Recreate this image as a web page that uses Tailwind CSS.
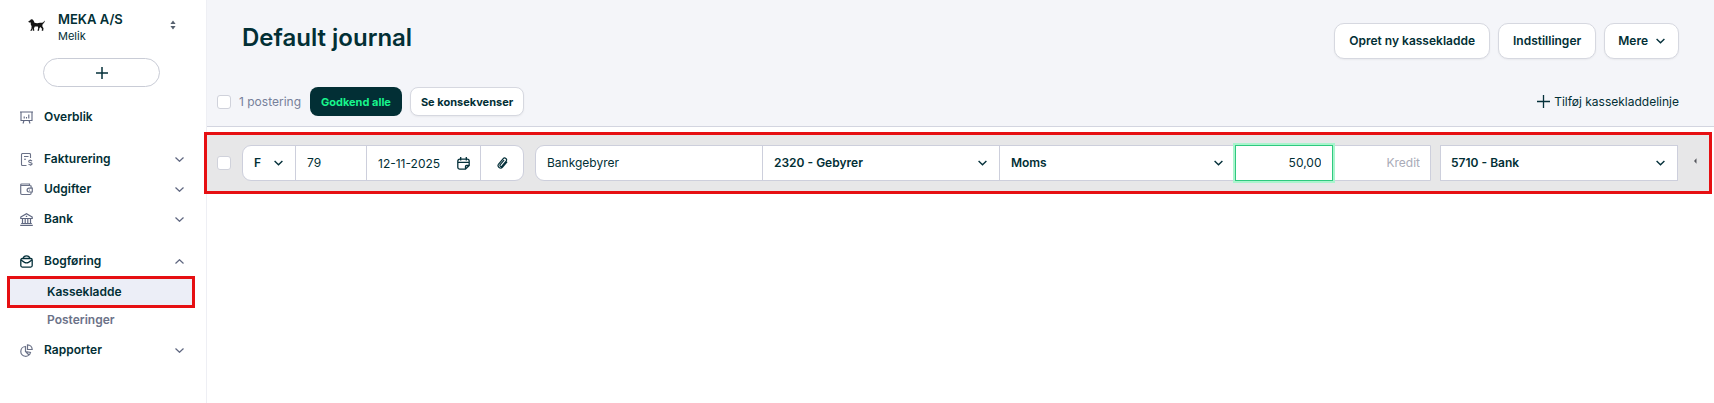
<!DOCTYPE html>
<html lang="da">
<head>
    <meta charset="UTF-8">
    <meta name="viewport" content="width=device-width, initial-scale=1.0">
    <title>Default journal</title>
    <script src="https://cdn.jsdelivr.net/npm/@tailwindcss/browser@4"></script>
</head>
<body class="flex min-h-screen bg-white font-['Inter','Liberation_Sans',sans-serif] text-xs leading-5 text-[#022f35]">

    <!-- Sidebar -->
    <aside class="flex w-[207px] shrink-0 flex-col border-r border-[#eeeff4] bg-white pt-2">
        <button type="button" class="flex items-center pl-7 pr-7 text-left">
            <svg class="h-[14px] w-[18px] shrink-0" viewBox="0 0 18 14" fill="#151515" aria-hidden="true">
                <path d="M.3 3.200 2 2.500 3 1.300 4.700 1.500 5.800 3 6.500 4.800Q9 5.500 12 4.800L13.800 4.800 15 4.400 16.800 2.600 16.600 4 15.200 5.800 14.500 6.500 14.300 8.300 15.500 10.200 15.200 12.800H13.700L14 10.800 12.300 9 11.300 10.600 11 12.800H9.500L10.200 10 9.800 8.600 6.800 8.500 6 10.200 6.300 12.800H4.800L4.700 10.200 3.800 12.800H2.200L3.400 10.800 3.600 8.200 2.700 6.200 2.800 4.600 1 4.500Z"/>
            </svg>
            <span class="ml-3 flex-1">
                <span class="block text-[13px] leading-[22px] font-semibold">MEKA A/S</span>
                <span class="block text-[11px] leading-3">Melik</span>
            </span>
            <svg class="h-2.5 w-[10px]" viewBox="0 0 10 10" fill="#56616f" aria-hidden="true">
                <path d="M5 .6 7.600 4H2.400ZM5 9.400 2.400 6h5.200Z"/>
            </svg>
        </button>

        <button type="button" aria-label="Opret" class="mr-[46px] ml-[43px] mt-4 flex h-[29px] items-center justify-center rounded-full border border-[#c9ccd6] bg-white">
            <svg class="size-3" viewBox="0 0 12 12" fill="none" stroke="#04303a" stroke-width="1.500" aria-hidden="true"><path d="M6 0v12M0 6h12"/></svg>
        </button>

        <nav class="mt-[15px] flex flex-col font-semibold">
            <a href="#" class="flex h-[30px] items-center gap-[11px] pl-5">
                <svg class="size-[13px]" viewBox="0 0 13 13" fill="none" stroke="#5f6780" stroke-width="1.100" aria-hidden="true">
                    <path d="M0 1h13M1 1v8.500h11V1M4 9.500l-1 3M9 9.500l1 3M4.200 5.500v2M6.500 6v1.500M8.800 3.500v4"/>
                </svg>
                Overblik
            </a>
            <a href="#" class="mt-3 flex h-[30px] items-center gap-[11px] pl-5 pr-[22px]">
                <svg class="size-[13px]" viewBox="0 0 13 13" fill="none" stroke="#6b7288" stroke-width="1.100" aria-hidden="true">
                    <path d="M10.500 5V1.500a1 1 0 0 0-1-1h-7a1 1 0 0 0-1 1v10a1 1 0 0 0 1 1h4M4 3.500h4.500M4 6.200h2M12 8c-1-1-3.500-.8-3.300.7.2 1.300 3.400.6 3.400 2.100 0 1.300-2.500 1.400-3.600.4M10.400 6.500v1M10.400 11.800v1"/>
                </svg>
                Fakturering
                <svg class="ml-auto h-[5px] w-[9px]" viewBox="0 0 9 5" fill="none" stroke="#5f6780" stroke-width="1.200" aria-hidden="true"><path d="m.5.5 4 3.800 4-3.800"/></svg>
            </a>
            <a href="#" class="flex h-[30px] items-center gap-[11px] pl-5 pr-[22px]">
                <svg class="size-[13px]" viewBox="0 0 13 13" fill="none" stroke="#6b7288" stroke-width="1.200" aria-hidden="true">
                    <path d="M.7 2v8.300a1.200 1.200 0 0 0 1.200 1.200h8a1.200 1.200 0 0 0 1.200-1.200V9M11.100 5V3.500a1 1 0 0 0-1-1H1.500a.7.7 0 0 1 0-1.500h8v1.500"/>
                    <path d="M12.300 5.200H9a1.900 1.900 0 0 0 0 3.800h3.300zM9 7.100h.8"/>
                </svg>
                Udgifter
                <svg class="ml-auto h-[5px] w-[9px]" viewBox="0 0 9 5" fill="none" stroke="#5f6780" stroke-width="1.200" aria-hidden="true"><path d="m.5.5 4 3.800 4-3.800"/></svg>
            </a>
            <a href="#" class="flex h-[30px] items-center gap-[11px] pl-5 pr-[22px]">
                <svg class="size-[13px]" viewBox="0 0 13 13" fill="none" stroke="#5f6780" stroke-width="1.200" aria-hidden="true">
                    <path d="M.8 4 6.500.800l5.700 3.200v1.500H.8zM5.800 3.400h1.400M2.500 5.500V10.500M5.200 5.500V10.500M7.800 5.500V10.500M10.500 5.500V10.500M1.200 10.500h10.600M.2 12.400h12.600"/>
                </svg>
                Bank
                <svg class="ml-auto h-[5px] w-[9px]" viewBox="0 0 9 5" fill="none" stroke="#5f6780" stroke-width="1.200" aria-hidden="true"><path d="m.5.5 4 3.800 4-3.800"/></svg>
            </a>
            <a href="#" class="mt-3 flex h-[30px] items-center gap-[11px] pl-5 pr-[22px]">
                <svg class="size-[13px]" viewBox="0 0 13 13" fill="none" stroke="#04303a" stroke-width="1.300" aria-hidden="true">
                    <rect x=".8" y="3.500" width="11.400" height="8.600" rx="1.500"/>
                    <path d="M3.200 3.500C3.500 1.600 4.800.8 6.500.8s3 .8 3.300 2.700M1 5l3.500 2.400q2 1 4 0L12 5"/>
                </svg>
                Bogføring
                <svg class="ml-auto h-[5px] w-[9px]" viewBox="0 0 9 5" fill="none" stroke="#5f6780" stroke-width="1.200" aria-hidden="true"><path d="m.5 4.500 4-3.800 4 3.800"/></svg>
            </a>
            <a href="#" aria-current="page" class="ml-[7px] mr-[11px] flex h-8 items-center border-[3px] border-[#e60f12] bg-[#eceef7] pl-[37px]">Kassekladde</a>
            <a href="#" class="flex h-6 items-center pl-[47px] text-[#6b7288]">Posteringer</a>
            <a href="#" class="mt-[3px] flex h-[30px] items-center gap-[11px] pl-5 pr-[22px]">
                <svg class="size-[13px]" viewBox="0 0 13 13" fill="none" stroke="#6b7288" stroke-width="1.200" aria-hidden="true">
                    <path d="M5.500 2.500a4.900 4.900 0 1 0 5 5.900L5.500 7.500zM7.500.8v4.700h4.700A4.800 4.800 0 0 0 7.500.8zM5.500 7.500 9 11"/>
                </svg>
                Rapporter
                <svg class="ml-auto h-[5px] w-[9px]" viewBox="0 0 9 5" fill="none" stroke="#5f6780" stroke-width="1.200" aria-hidden="true"><path d="m.5.5 4 3.800 4-3.800"/></svg>
            </a>
        </nav>
    </aside>

    <main class="min-w-0 flex-1">
        <header class="border-b border-[#d3d5e0] bg-[#f4f5f9] pt-[23px] pb-[10px]">
            <div class="flex items-start justify-between pl-[35px] pr-[35px]">
                <h1 class="text-2xl leading-[30px] font-semibold">Default journal</h1>
                <div class="flex gap-2 font-semibold">
                    <button type="button" class="h-9 rounded-[10px] border border-[#d6d8e0] bg-white px-[14px] shadow-xs">Opret ny kassekladde</button>
                    <button type="button" class="h-9 rounded-[10px] border border-[#d6d8e0] bg-white px-[14px] shadow-xs">Indstillinger</button>
                    <button type="button" class="flex h-9 items-center gap-2 rounded-[10px] border border-[#d6d8e0] bg-white px-[13px] shadow-xs">
                        Mere
                        <svg class="h-[6px] w-[9px]" viewBox="0 0 9 6" fill="none" stroke="#04303a" stroke-width="1.400" aria-hidden="true"><path d="m.6 1 3.900 3.800L8.400 1"/></svg>
                    </button>
                </div>
            </div>

            <div class="mt-7 flex items-center pl-[10px] pr-[35px]">
                <input type="checkbox" id="selectAll" class="size-[14px] appearance-none rounded-[3px] border border-[#d0d2db] bg-white">
                <label for="selectAll" class="ml-2 text-[#76809a]">1 postering</label>
                <button type="button" class="ml-[9px] h-[29px] rounded-lg bg-[#022f35] px-[11px] text-[11px] font-bold text-[#18f58c]">Godkend alle</button>
                <button type="button" class="ml-2 h-[29px] rounded-lg border border-[#d6d8e0] bg-white px-[10px] text-[11px] font-bold shadow-xs">Se konsekvenser</button>
                <button type="button" class="ml-auto flex items-center gap-1">
                    <svg class="size-[13px]" viewBox="0 0 13 13" fill="none" stroke="#04303a" stroke-width="1.300" aria-hidden="true"><path d="M6.500 0v13M0 6.500h13"/></svg>
                    Tilføj kassekladdelinje
                </button>
            </div>
        </header>

        <!-- Journal line -->
        <form class="relative mt-[5px] mr-[2px] -ml-[3px] flex h-[62px] items-center border-[3px] border-[#e60f12] bg-[#e7e7e8] pl-[10px] pr-[12px]">
            <input type="checkbox" aria-label="Vælg linje" class="size-[14px] shrink-0 appearance-none rounded-[3px] border border-[#d0d2db] bg-white">

            <div class="ml-[11px] flex h-9 shrink-0 divide-x divide-[#cdcfdc] overflow-hidden rounded-[9px] border border-[#cdcfdc] bg-white">
                <div class="relative w-[53px]">
                    <select aria-label="Type" class="h-full w-full appearance-none pl-[11px] font-semibold">
                        <option>F</option>
                    </select>
                    <svg class="pointer-events-none absolute top-[14px] right-3 h-[6px] w-[9px]" viewBox="0 0 9 6" fill="none" stroke="#04303a" stroke-width="1.400" aria-hidden="true"><path d="m.6 1 3.900 3.800L8.400 1"/></svg>
                </div>
                <input type="text" aria-label="Bilagsnummer" value="79" class="w-[71px] px-[11px]">
                <div class="flex w-[114px] items-center">
                    <input type="text" aria-label="Dato" value="12-11-2025" class="h-full min-w-0 flex-1 pl-[11px]">
                    <button type="button" aria-label="Vælg dato" class="mr-[10px]">
                        <svg class="size-[13px]" viewBox="0 0 13 13" fill="none" stroke="#04303a" stroke-width="1.300" aria-hidden="true">
                            <path d="M8.500 12.200H2.800a2 2 0 0 1-2-2v-6a2 2 0 0 1 2-2h7.400a2 2 0 0 1 2 2v4.300zM8.500 12.200V9.500a1 1 0 0 1 1-1h2.700M.8 5.300h11.400M3.700 0v3.500M9.300 0v3.500"/>
                        </svg>
                    </button>
                </div>
                <button type="button" aria-label="Vedhæft bilag" class="flex w-[42px] items-center justify-center">
                    <svg class="h-3 w-[11px]" viewBox="0 0 11 12" fill="none" stroke="#04303a" stroke-width="1.200" stroke-linecap="round" aria-hidden="true">
                        <path d="M9.800 5.200 5.600 10.100C3.400 12.500-.3 9.600 1.600 7L6 1.800C7.800-.1 10.700 2 9.100 4.200L5.100 9C3.900 10.200 2.200 8.900 3.200 7.600L6.800 3.400"/>
                    </svg>
                </button>
            </div>

            <div class="ml-[11px] grid h-9 min-w-0 flex-898 grid-cols-[227fr_238fr_237fr_99fr_97fr] rounded-l-[9px] border border-[#cdcfdc] bg-white">
                <input type="text" aria-label="Tekst" value="Bankgebyrer" class="min-w-0 rounded-l-[9px] px-[11px]">
                <div class="relative border-l border-[#cdcfdc]">
                    <select aria-label="Konto" class="h-full w-full appearance-none pl-[11px] font-semibold">
                        <option>2320 - Gebyrer</option>
                    </select>
                    <svg class="pointer-events-none absolute top-[14px] right-3 h-[6px] w-[9px]" viewBox="0 0 9 6" fill="none" stroke="#04303a" stroke-width="1.400" aria-hidden="true"><path d="m.6 1 3.900 3.800L8.400 1"/></svg>
                </div>
                <div class="relative border-l border-[#cdcfdc]">
                    <select aria-label="Moms" class="h-full w-full appearance-none pl-[11px] font-semibold">
                        <option>Moms</option>
                    </select>
                    <svg class="pointer-events-none absolute top-[14px] right-3 h-[6px] w-[9px]" viewBox="0 0 9 6" fill="none" stroke="#04303a" stroke-width="1.400" aria-hidden="true"><path d="m.6 1 3.900 3.800L8.400 1"/></svg>
                </div>
                <input type="text" aria-label="Debet" value="50,00" class="-my-px min-w-0 border border-[#2fc97f] bg-white px-[11px] text-right ring-2 ring-[#a9f5cd]">
                <input type="text" aria-label="Kredit" placeholder="Kredit" class="min-w-0 px-[10px] text-right placeholder:text-[#a9abb7]">
            </div>

            <div class="relative ml-[9px] h-9 min-w-0 flex-237 border border-[#cdcfdc] bg-white">
                <select aria-label="Modkonto" class="h-full w-full appearance-none pl-[10px] font-semibold">
                    <option>5710 - Bank</option>
                </select>
                <svg class="pointer-events-none absolute top-[14px] right-3 h-[6px] w-[9px]" viewBox="0 0 9 6" fill="none" stroke="#04303a" stroke-width="1.400" aria-hidden="true"><path d="m.6 1 3.900 3.800L8.400 1"/></svg>
            </div>

            <button type="button" aria-label="Flere valg" class="ml-4 pb-1">
                <svg class="h-[6px] w-[3px]" viewBox="0 0 3 6" fill="#55565c" aria-hidden="true"><path d="M0 3 2.500.3v5.400z"/></svg>
            </button>
        </form>
    </main>

</body>
</html>
